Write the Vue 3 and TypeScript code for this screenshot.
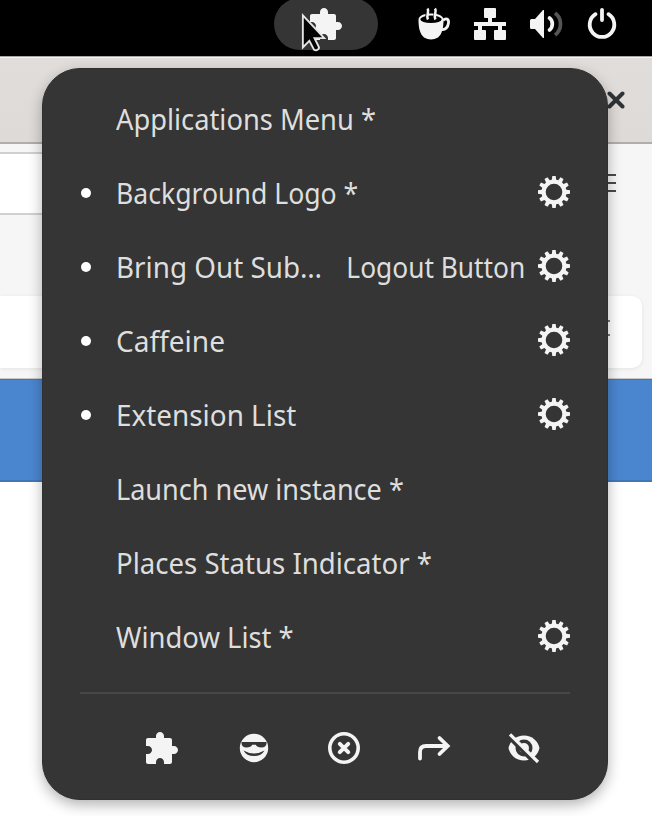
<script setup lang="ts">
interface Extension {
  name: string
  stretch: number
  suffix?: string
  enabled: boolean
  settings: boolean
}

const extensions: Extension[] = [
  { name: 'Applications Menu *', stretch: 0.941, enabled: false, settings: false },
  { name: 'Background Logo *', stretch: 0.917, enabled: true, settings: true },
  { name: 'Bring Out Sub…', stretch: 0.959, suffix: 'Logout Button', enabled: true, settings: true },
  { name: 'Caffeine', stretch: 0.967, enabled: true, settings: true },
  { name: 'Extension List', stretch: 0.961, enabled: true, settings: true },
  { name: 'Launch new instance *', stretch: 0.933, enabled: false, settings: false },
  { name: 'Places Status Indicator *', stretch: 0.951, enabled: false, settings: false },
  { name: 'Window List *', stretch: 0.945, enabled: false, settings: true },
]

const teeth = Array.from({ length: 12 }, (_, i) => i * 30)

const puzzle =
  'M7 0C5.9 0 5 .9 5 2v1H1C.45 3 0 3.45 0 4v3h1c1.1 0 2 .9 2 2s-.9 2-2 2H0v4c0 .55.45 1 1 1h4v-1c0-1.1.9-2 2-2s2 .9 2 2v1h3c.55 0 1-.45 1-1v-4h1c1.1 0 2-.9 2-2s-.9-2-2-2h-1V4c0-.55-.45-1-1-1H9V2C9 .9 8.1 0 7 0z'
</script>

<template>
  <div class="screen">
    <header class="topbar">
      <div class="indicator">
        <svg class="icon" viewBox="0 0 16 16"><path :d="puzzle" /></svg>
        <svg class="cursor" viewBox="0 0 28 42">
          <path d="M2 2V36.500L9 29.500L14 39Q16 40.500 18.500 38.500Q20 37.500 19 35.500L14.500 26.500H25Z" />
        </svg>
      </div>
      <div class="status">
        <svg class="icon" viewBox="0 0 32 32">
          <path d="M0.500 12C0.500 8 5 5.500 13 5.500S25.500 8 25.500 12C25.500 20 24 26 20 29.500Q13 33.500 6 29.500C2 26 .5 20 .5 12Z" />
          <ellipse cx="13" cy="11.300" rx="10.700" ry="3.700" class="dark" />
          <path class="dark-line" d="M7 0C11 3 6 7 9 11M15 0C19 3 14 7 17 11" />
          <path class="line" d="M9.500 0.500C12 4 7.500 7 10 11.500M17 0.500C19.500 4 15 7 17.500 11.500" stroke-width="2.600" />
          <path class="line" d="M25 12.500C28 9.500 31 11 30.500 15C30 19.500 27 22 24 21.500" stroke-width="2.800" />
        </svg>
        <svg class="icon" viewBox="0 0 16 16">
          <path d="M5.500 0h5q.5 0 .5.500v4q0 .5-.5.500H9v2h7v2h-2v2h1.500q.5 0 .5.500v4q0 .5-.5.500h-5q-.5 0-.5-.5v-4q0-.5.5-.5H12V9H4v2h1.500q.5 0 .5.500v4q0 .5-.5.500h-5q-.5 0-.5-.5v-4q0-.5.500-.5H2V9H0V7h7V5H5.500q-.5 0-.5-.5v-4q0-.5.5-.5Z" />
        </svg>
        <svg class="icon" viewBox="0 0 32 32">
          <path d="M1.500 11H5L13 2H14V30H13L5 21H1.500Q0 21 0 19.500V12.500Q0 11 1.500 11Z" />
          <path class="line" d="M19.500 10Q22.300 12 22.300 16T19.500 22" stroke-width="3.700" stroke-linecap="round" />
          <path class="line faint" d="M25 5Q30.500 9 30.500 16T25 27" stroke-width="3.700" />
        </svg>
        <svg class="icon" viewBox="0 0 32 32">
          <path class="line" d="M9.500 6.200A12.300 12.300 0 1 0 22.500 6.200" stroke-width="3.800" stroke-linecap="round" />
          <path class="line" d="M16 2V12" stroke-width="3.800" stroke-linecap="round" />
        </svg>
      </div>
    </header>

    <div class="titlebar">
      <svg class="close" viewBox="0 0 18 18"><path d="M2.500 2.500L15.500 15.500M15.500 2.500L2.500 15.500" /></svg>
    </div>
    <div class="toolbar">
      <div class="entry"></div>
      <div class="hamburger"><i></i><i></i><i></i></div>
    </div>
    <div class="panel"><div class="card"><i></i><i></i></div></div>
    <div class="banner"></div>

    <main class="menu">
      <ul class="list">
        <li v-for="ext in extensions" :key="ext.name" class="row">
          <span class="mark"><i v-if="ext.enabled" class="dot"></i></span>
          <span class="label" :style="{ transform: `scaleX(${ext.stretch})` }">{{ ext.name }}</span>
          <span v-if="ext.suffix" class="suffix">{{ ext.suffix }}</span>
          <svg v-if="ext.settings" class="icon gear" :class="{ joined: ext.suffix }" viewBox="0 0 32 32">
            <circle class="line" cx="16" cy="16" r="10.400" stroke-width="4.200" />
            <path v-for="a in teeth" :key="a" d="M13.600 5.500L14.300 0H17.700L18.400 5.500Z" :transform="`rotate(${a} 16 16)`" />
          </svg>
        </li>
      </ul>
      <hr class="separator" />
      <footer class="actions">
        <svg class="icon nudged" viewBox="0 0 16 16"><path :d="puzzle" /></svg>
        <svg class="icon" viewBox="0 0 32 32">
          <circle cx="16" cy="16" r="14.200" />
          <path class="cut" d="M3.500 10H28.500V11.500Q28 15.500 23.500 15.500Q19 15.500 17.800 12.800H14.200Q13 15.500 8.500 15.500Q4 15.500 3.500 11.500Z" />
          <path class="cut" d="M5.500 18.500Q16 24.500 26.500 18.500Q23.500 24 16 24T5.500 18.500Z" />
        </svg>
        <svg class="icon" viewBox="0 0 32 32">
          <circle class="line" cx="16" cy="16" r="14.200" stroke-width="3.600" />
          <path class="line" d="M11.800 11.800L20.200 20.200M20.200 11.800L11.800 20.200" stroke-width="4" stroke-linecap="round" />
        </svg>
        <svg class="icon" viewBox="0 0 32 32">
          <path class="line" d="M2 26.500V20Q2 14 8 14H29M21.500 6L29.700 14L21.500 22" stroke-width="3.800" stroke-linecap="round" />
        </svg>
        <svg class="icon" viewBox="0 0 32 32">
          <path d="M16 3.500C8 3.500 2 9 .5 16C2 23 8 28.500 16 28.500S30 23 31.500 16C30 9 24 3.500 16 3.500Z" />
          <circle class="cut" cx="16" cy="16" r="8.500" />
          <circle cx="16" cy="16" r="5" />
          <path class="cut-line" d="M-0.500 3L27 30.500" stroke-width="5" />
          <path class="line" d="M2 2.300L30 30" stroke-width="3.200" />
        </svg>
      </footer>
    </main>
  </div>
</template>

<style>
body { overflow: hidden; }
</style>

<style scoped>
* { box-sizing: border-box; }
.screen {
  position: relative;
  width: 652px;
  height: 816px;
  overflow: hidden;
  background: #fff;
  font-family: "Noto Sans", "Open Sans", sans-serif;
  color: #dedede;
}
.icon {
  display: block;
  flex: none;
  width: 32px;
  height: 32px;
  overflow: visible;
  fill: #f4f4f4;
}
.line { fill: none; stroke: #f4f4f4; }
.faint { opacity: 0.35; }
.dark { fill: #000; }
.dark-line { fill: none; stroke: #000; stroke-width: 1.5; }
.cut { fill: #353535; }
.cut-line { fill: none; stroke: #353535; }
.topbar {
  display: flex;
  height: 56px;
  padding-left: 274px;
  background: #000;
}
.indicator {
  position: relative;
  display: flex;
  align-items: center;
  justify-content: center;
  width: 104px;
  height: 52px;
  margin-top: -2px;
  border-radius: 26px;
  background: #353535;
}
.cursor {
  position: absolute;
  left: 27px;
  top: 15px;
  width: 26px;
  height: 40px;
  fill: #050505;
  stroke: #e6e6e6;
  stroke-width: 2;
}
.status {
  display: flex;
  gap: 24px;
  height: 32px;
  margin: 8px 0 0 40px;
}
.titlebar {
  display: flex;
  align-items: center;
  justify-content: flex-end;
  height: 88px;
  padding-right: 27px;
  background: linear-gradient(#e1ddda, #dedad7);
  border-top: 1px solid #a8a4a4;
  border-bottom: 2px solid #b1adac;
  box-shadow: inset 0 1px #f5f3f3;
}
.close {
  width: 18px;
  height: 18px;
  fill: none;
  stroke: #2e3436;
  stroke-width: 4;
  stroke-linecap: round;
}
.toolbar {
  display: flex;
  justify-content: space-between;
  height: 152px;
  padding: 8px 36px 0 0;
  background: #f6f6f6;
}
.entry {
  width: 400px;
  height: 63px;
  background: #fff;
  border-top: 2px solid #d2cfcd;
  border-bottom: 2px solid #d2cfcd;
}
.hamburger {
  display: flex;
  flex-direction: column;
  gap: 6px;
  width: 24px;
  padding-top: 22px;
}
.hamburger i { height: 2px; background: #46494a; }
.panel {
  height: 83px;
  padding-right: 10px;
  background: #f6f6f6;
  border-bottom: 1px solid #c9c9c9;
}
.card {
  display: flex;
  flex-direction: column;
  align-items: flex-end;
  gap: 12px;
  height: 72px;
  padding: 24px 32px 0 0;
  border-radius: 0 10px 10px 0;
  background: #fff;
  box-shadow: 0 1px 4px rgba(0, 0, 0, 0.08);
}
.card i { width: 14px; height: 2px; background: #777; }
.banner {
  height: 103px;
  background: #4a86cf;
  border-top: 1px solid #4277b7;
  border-bottom: 2px solid #4277b7;
}
.menu {
  position: absolute;
  left: 42px;
  top: 68px;
  width: 566px;
  height: 732px;
  padding: 13px 38px 0;
  border: 1px solid #303030;
  border-radius: 38px;
  background: #353535;
  box-shadow: 0 5px 14px rgba(0, 0, 0, 0.3);
}
.list { margin: 0; padding: 0; list-style: none; }
.row {
  display: flex;
  align-items: center;
  height: 74px;
  font-size: 29px;
  line-height: 40px;
  white-space: nowrap;
}
.mark { display: flex; flex: none; width: 35px; }
.dot { width: 10px; height: 10px; border-radius: 50%; background: #fff; }
.label {
  flex: none;
  margin-right: -12px;
  transform-origin: left center;
}
.suffix {
  flex: none;
  margin-left: auto;
  transform: scaleX(0.907);
  transform-origin: right center;
}
.gear { margin: -2px -1px 0 auto; }
.gear.joined { margin-left: 12.5px; }
.separator {
  height: 2px;
  margin: 18px -1px 0;
  border: 0;
  background: #474747;
}
.actions {
  display: flex;
  gap: 58px;
  padding: 38px 0 0 67px;
}
.nudged { margin: 0 2px 0 -2px; }
</style>
